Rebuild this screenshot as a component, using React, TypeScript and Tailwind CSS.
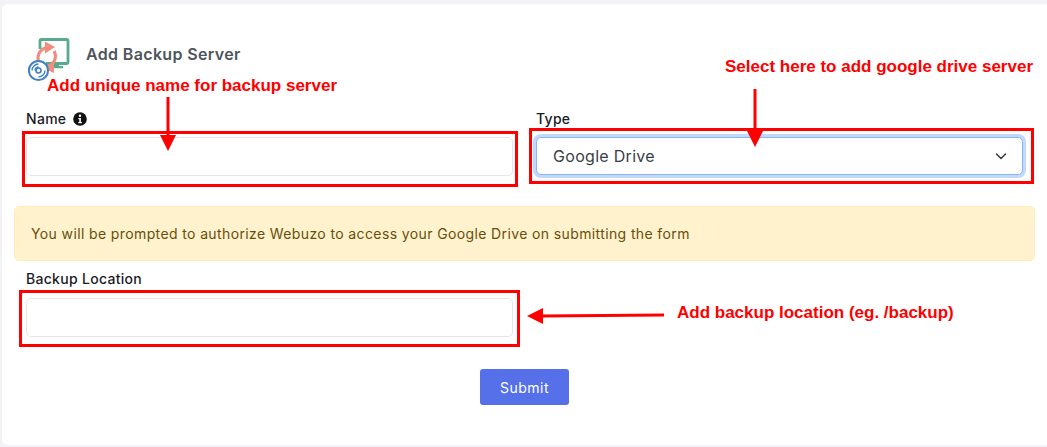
const font = "font-['Inter','Noto_Sans',sans-serif]";

function BackupIcon() {
  return (
    <svg width="46" height="46" viewBox="0 0 46 46" fill="none" className="shrink-0">
      <path d="M12 11V3a1.5 1.5 0 0 1 1.5-1.5h25A1.5 1.5 0 0 1 40 3v21a1.5 1.5 0 0 1-1.5 1.5H18" stroke="#59ab8d" strokeWidth="2.8" />
      <path d="M21 26h10v2h4v2.2H19v-2.2h2z" fill="#59ab8d" />
      <path d="M10.5 24c-2-8 2.500-14.500 11-15" stroke="#ee8d80" strokeWidth="3.200" />
      <path d="M17 3.500l10 5.500-10 6.500z" fill="#ee8d80" />
      <path d="M26 13c3.500 6.500 0 13.500-6 15.500" stroke="#ee8d80" strokeWidth="3.200" />
      <path d="M26 23.500l-12 6 12 5.500z" fill="#ee8d80" />
      <circle cx="10.500" cy="32.500" r="9.600" stroke="#3d80c4" strokeWidth="2" fill="#fff" />
      <path d="M10.500 26a6.500 6.500 0 0 0-6.500 6.500M10.500 39a6.500 6.500 0 0 0 6.500-6.500M10.500 29a3.500 3.500 0 0 0-3.500 3.500" stroke="#3d80c4" strokeWidth="1.400" />
      <circle cx="10.500" cy="32.500" r="2.500" stroke="#3d80c4" strokeWidth="1.600" fill="#fff" />
    </svg>
  );
}

function Field({ label, info, gapClass, children }: { label: string; info?: boolean; gapClass: string; children: React.ReactNode }) {
  return (
    <div className="flex flex-col">
      <div className={`flex items-center gap-[7px] h-[18px] text-[14px] tracking-[0.3px] font-medium leading-[18px] text-[#1b1b1f] ${gapClass}`}>
        {label}
        {info && (
          <svg width="14" height="14" viewBox="0 0 14 14">
            <circle cx="7" cy="7" r="6.800" fill="#111" />
            <circle cx="7" cy="3.800" r="1.200" fill="#fff" />
            <path d="M5.400 6h2.500v4h1v1.200H5.300V10h1V7.200h-.9z" fill="#fff" />
          </svg>
        )}
      </div>
      {children}
    </div>
  );
}

function RedBox({ className }: { className: string }) {
  return <div className={`absolute border-[3px] border-[#ff0000] pointer-events-none ${className}`} />;
}

function Note({ className, children }: { className: string; children: React.ReactNode }) {
  return (
    <div className={`absolute font-['Liberation_Sans',Arial,sans-serif] font-bold text-[17px] leading-[18px] whitespace-nowrap text-[#ff0000] ${className}`}>
      {children}
    </div>
  );
}

export default function App() {
  return (
    <div className={`relative w-[1047px] h-[447px] overflow-hidden bg-[#f2f3f7] pt-[4px] pl-[2px] pb-[2px] ${font}`}>
      <div className="bg-white rounded-l-[6px] h-[441px] w-[1045px] flex flex-col">
        <div className="flex items-start gap-[12px] pl-[26px] pt-[34px] h-[106px]">
          <BackupIcon />
          <h1 className="mt-[5px] text-[16px] tracking-[0.35px] leading-[22px] font-semibold text-[#4f555c]">Add Backup Server</h1>
        </div>
        <div className="grid grid-cols-[487px_487px] gap-x-[23px] pl-[24px] h-[67px]">
          <Field label="Name" info gapClass="mb-[9px]">
            <input className="h-[39px] w-full rounded-[5px] border border-[#e4e6ea] bg-white" />
          </Field>
          <Field label="Type" gapClass="mb-[9px]">
            <div className="h-[38px] w-full rounded-[5px] border border-[#86b7fe] ring-[3px] ring-[#c2d9fd] bg-white flex items-center justify-between pl-[16px] pr-[15px] text-[16px] tracking-[0.3px] text-[#3a3f45]">
              Google Drive
              <svg width="12" height="12" viewBox="0 0 12 12" fill="none" stroke="#343a40" strokeWidth="1.500" strokeLinecap="round" strokeLinejoin="round">
                <path d="M1.500 4l4.500 4.500L10.500 4" />
              </svg>
            </div>
          </Field>
        </div>
        <div className="mt-[29px] ml-[12px] w-[1021px] h-[55px] rounded-[5px] border border-[#ffeeba] bg-[#fff2cd] flex items-center pl-[16px] text-[14px] tracking-[0.38px] text-[#674f0c]">
          You will be prompted to authorize Webuzo to access your Google Drive on submitting the form
        </div>
        <div className="mt-[9px] pl-[24px] w-[511px]">
          <Field label="Backup Location" gapClass="mb-[10px]">
            <input className="h-[39px] w-full rounded-[5px] border border-[#e4e6ea] bg-white" />
          </Field>
        </div>
        <div className="flex mt-[32px] pl-[478px]">
          <button className="w-[89px] h-[36px] rounded-[3px] bg-[#5570e8] text-white text-[14px] tracking-[0.5px]">Submit</button>
        </div>
      </div>

      <RedBox className="left-[22px] top-[131px] w-[496px] h-[56px]" />
      <RedBox className="left-[529px] top-[128px] w-[505px] h-[56px]" />
      <RedBox className="left-[19px] top-[290px] w-[501px] h-[57px]" />

      <Note className="left-[47px] top-[77px]">Add unique name for backup server</Note>
      <Note className="left-[725px] top-[58px]">Select here to add google drive server</Note>
      <Note className="left-[677px] top-[304px]">Add backup location (eg. /backup)</Note>

      <svg className="absolute left-0 top-0 pointer-events-none" width="1047" height="447" fill="none">
        <path d="M168 97v40" stroke="#ff0000" strokeWidth="3" />
        <path d="M160 135h16l-8 16z" fill="#ff0000" />
        <path d="M755 89v45" stroke="#ff0000" strokeWidth="3" />
        <path d="M747 131h16l-8 16z" fill="#ff0000" />
        <path d="M540 316l124-1" stroke="#ff0000" strokeWidth="3" />
        <path d="M527 316l16-8v16z" fill="#ff0000" />
      </svg>
    </div>
  );
}
